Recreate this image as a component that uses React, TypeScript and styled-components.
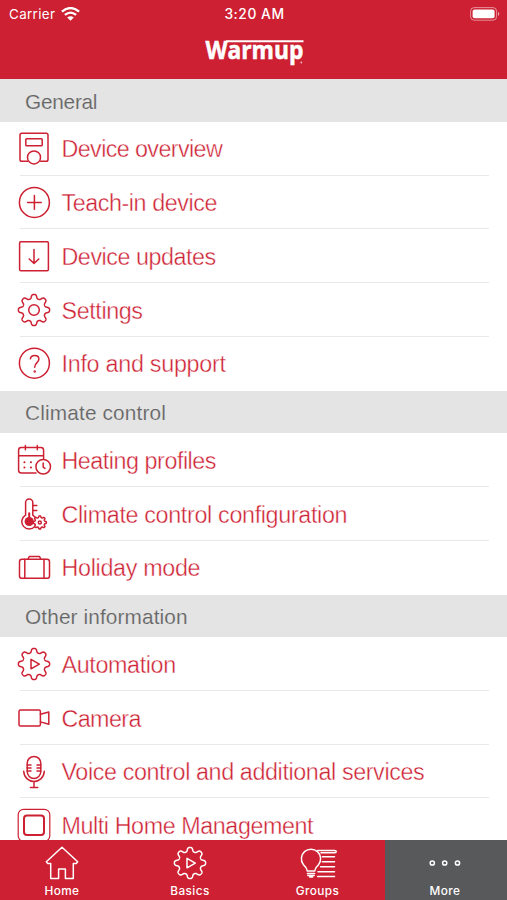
import React from 'react';
import styled, { createGlobalStyle } from 'styled-components';

const RED = '#cd2032';

const GlobalStyle = createGlobalStyle`
  * { box-sizing: border-box; }
  body { margin: 0; background: #fff; }
`;

const Screen = styled.div`
  width: 507px;
  height: 900px;
  display: flex;
  flex-direction: column;
  overflow: hidden;
  background: #fff;
  font-family: "Liberation Sans", Arial, sans-serif;
`;

const Header = styled.header`
  flex: none;
  height: 79.2px;
  background: ${RED};
  color: #fff;
`;

const StatusBar = styled.div`
  height: 26px;
  padding: 1px 7px 0 9px;
  display: grid;
  grid-template-columns: 1fr auto 1fr;
  align-items: center;
  font: 400 13.4px/24px Inter, sans-serif;
`;

const StatusGroup = styled.div<{ $end?: boolean }>`
  display: flex;
  align-items: center;
  gap: 6px;
  letter-spacing: 0.35px;
  justify-content: ${p => (p.$end ? 'flex-end' : 'flex-start')};
`;

const Clock = styled.div`
  font-weight: 500;
  font-size: 13.8px;
  letter-spacing: 0.55px;
`;

const Brand = styled.div`
  display: flex;
  justify-content: center;
  padding-top: 6px;
`;

const List = styled.main`
  flex: 1;
  min-height: 0;
  overflow: hidden;
`;

const SectionTitle = styled.h2<{ $spacing: number }>`
  margin: 0;
  height: 42.8px;
  padding: 1.5px 0 0 25px;
  background: #e4e4e4;
  color: #666;
  font-weight: 400;
  font-size: 20.8px;
  line-height: 42px;
  letter-spacing: ${p => p.$spacing}px;
  -webkit-text-stroke: 0.15px #e4e4e4;
`;

const Row = styled.div`
  height: 53.73px;
  padding-left: 16px;
  display: flex;
  align-items: center;
`;

const RowIcon = styled.svg`
  flex: none;
  width: 36px;
  height: 36px;
  overflow: visible;
  fill: none;
  stroke: ${RED};
  stroke-width: 1.5;
  stroke-linecap: round;
  stroke-linejoin: round;
`;

const RowLabel = styled.span<{ $spacing: number }>`
  margin-left: 9.5px;
  padding-top: 1.2px;
  white-space: nowrap;
  color: ${RED};
  font-size: 23.3px;
  line-height: 30px;
  letter-spacing: ${p => p.$spacing}px;
  -webkit-text-stroke: 0.4px #fff;
`;

const Divider = styled.div`
  height: 1px;
  margin: -1px 18px 0 20px;
  background: #e8e8ea;
`;

const TabBar = styled.nav`
  flex: none;
  height: 60.3px;
  display: grid;
  grid-template-columns: 124px 132px 129px 1fr;
  background: ${RED};
`;

const Tab = styled.div<{ $active?: boolean; $shift?: number }>`
  display: flex;
  flex-direction: column;
  align-items: center;
  padding: 5px ${p => p.$shift ?? 0}px 0 0;
  background: ${p => (p.$active ? '#58595b' : RED)};
  color: #fff;
  font: 500 11.8px/16px Inter, sans-serif;
  letter-spacing: 0.4px;
`;

const TabIcon = styled(RowIcon)`
  stroke: #fff;
  margin-bottom: 2.6px;
`;

function gearPath(cx: number, cy: number, base: number, depth: number, teeth = 8) {
  const points: string[] = [];
  for (let i = 0; i < 240; i++) {
    const a = (i / 240) * Math.PI * 2;
    const r = base + (depth * Math.tanh(1.7 * Math.cos(teeth * a))) / Math.tanh(1.7);
    points.push(`${(cx + r * Math.sin(a)).toFixed(2)} ${(cy - r * Math.cos(a)).toFixed(2)}`);
  }
  return `M${points.join('L')}Z`;
}

const gear = gearPath(0, 0, 13.6, 2);

const icons = {
  device: (
    <>
      <path d="M-6.4 12.3H-12.2Q-14 12.3-14 10.5V-14Q-14-15.8-12.2-15.8H12.2Q14-15.8 14-14V10.5Q14 12.3 12.2 12.3H6.4" />
      <rect x="-8.2" y="-10.2" width="16.4" height="7" rx="0.8" />
      <circle cx="0" cy="8.4" r="6.5" />
    </>
  ),
  add: (
    <>
      <circle cx="0.4" cy="-0.6" r="15" />
      <path d="M-6.4-.6H7.2M.4-7.4V6.2" />
    </>
  ),
  update: (
    <>
      <rect x="-14.4" y="-14.3" width="28.8" height="29" rx="1.2" />
      <path d="M0-6.4V7.2M-4.8 3L0 7.4 4.8 3" />
    </>
  ),
  settings: (
    <>
      <path d={gear} />
      <circle r="5.3" />
    </>
  ),
  help: (
    <>
      <circle cx="0.4" cy="-0.8" r="15" />
      <path d="M-3.6-5.2Q-3.2-8.6 .8-8.6T4.9-4.9Q4.9-2.9 2.8-1.2T.7 3.2" />
      <circle cx="0.7" cy="7.5" r="0.5" />
    </>
  ),
  calendar: (
    <>
      <path d="M2 13H-12.5Q-15.4 13-15.4 10.2V-9.8Q-15.4-12.4-12.8-12.4H6.8Q9.6-12.4 9.6-9.8V-1.5M-15.4-4.2H9.6M-8.6-14.6V-10.2M3.3-14.6V-10.2" />
      <path d="M-9.6 2.2h.1M-3.1 2.2h.1M-9.6 7.4h.1M-3.1 7.4h.1" strokeWidth="2" />
      <circle cx="9.2" cy="6.7" r="7.3" />
      <path d="M9.2 3V7.2L11 8.4" />
    </>
  ),
  climate: (
    <>
      <path d="M-8.4 1.2V-11.5A3.6 3.6 0 0 1-1.2-11.5V1.2A7.4 7.4 0 1 1-8.4 1.2M-1.2-8.5H2.8M-1.2-3.6H2.8" />
      <circle cx="-4.8" cy="7.5" r="4.6" fill={RED} stroke="none" />
      <path d="M-4.8 7V-.8" strokeWidth="2" />
      <path d={gearPath(5.8, 8.5, 5.8, 0.8)} fill="#fff" />
      <circle cx="5.8" cy="8.5" r="1.5" />
    </>
  ),
  suitcase: (
    <>
      <rect x="-14.5" y="-8.7" width="30" height="19" rx="2.4" />
      <path d="M-9.2-8.7V10.3M10-8.7V10.3M-6-8.9L-4.7-11.5H5.5L6.8-8.9" />
    </>
  ),
  automation: (
    <>
      <path d={gear} />
      <path d="M-3-4.6V4.8L5.3.1Z" />
    </>
  ),
  camera: (
    <>
      <rect x="-15" y="-7.9" width="21.4" height="16" rx="1.5" />
      <path d="M6.4-3.7L14.8-6V6.2L6.4 3.9" />
    </>
  ),
  microphone: (
    <>
      <rect x="-6.8" y="-15.6" width="13.6" height="22" rx="6.8" />
      <path d="M-6.8-7H-3M-6.8-4H-3M-6.8-1H-3M6.8-7H3M6.8-4H3M6.8-1H3" />
      <path d="M-10.3-.8C-9.5 12.8 9.5 12.8 10.3-.8M0 9.8V15.4M-3.6 15.5H3.8" />
    </>
  ),
  multiHome: (
    <>
      <rect x="-15.8" y="-15.7" width="31.6" height="32" rx="5.5" strokeWidth="1.2" />
      <rect x="-10" y="-9.5" width="20" height="19.6" rx="3" strokeWidth="2" />
    </>
  ),
  home: (
    <path d="M0-15.7L15.7-1.2 14.2.5H11.3V15.4H3.4V6H-3.4V15.4H-11.3V.5H-14.2L-15.7-1.2Z" />
  ),
  groups: (
    <>
      <path d="M-10.8 8C-10.8 4.6-13 4-14.6 1.6A9.6 9.6 0 1 1 .6 1.6C-1 4-3.2 4.6-3.2 8Z" />
      <path d="M-10.6 10.4H-3.4M-10.2 12.6H-3.8M-8.4 14H-5.4" />
      <path d="M-.5-12.6H16.8Q18.2-12.6 18.2-11.4T16.8-10.2H3M4.4-6.2H16.5M4.4-1.2H16.5M2.6 3.8H16.5M0 8.8H16.5M-.4 13.6H16.5" />
    </>
  ),
  more: (
    <>
      <circle cx="-12.7" r="2.1" />
      <circle cx="-.3" r="2.1" />
      <circle cx="12.5" r="2.1" />
    </>
  ),
};

type IconName = keyof typeof icons;
type Item = { icon: IconName; label: string; spacing: number };

const sections: { title: string; spacing: number; items: Item[] }[] = [
  {
    title: 'General',
    spacing: -0.25,
    items: [
      { icon: 'device', label: 'Device overview', spacing: -0.6 },
      { icon: 'add', label: 'Teach-in device', spacing: -0.43 },
      { icon: 'update', label: 'Device updates', spacing: -0.45 },
      { icon: 'settings', label: 'Settings', spacing: -0.38 },
      { icon: 'help', label: 'Info and support', spacing: -0.26 },
    ],
  },
  {
    title: 'Climate control',
    spacing: 0.16,
    items: [
      { icon: 'calendar', label: 'Heating profiles', spacing: -0.46 },
      { icon: 'climate', label: 'Climate control configuration', spacing: -0.33 },
      { icon: 'suitcase', label: 'Holiday mode', spacing: -0.31 },
    ],
  },
  {
    title: 'Other information',
    spacing: 0.12,
    items: [
      { icon: 'automation', label: 'Automation', spacing: -0.36 },
      { icon: 'camera', label: 'Camera', spacing: -0.6 },
      { icon: 'microphone', label: 'Voice control and additional services', spacing: -0.38 },
      { icon: 'multiHome', label: 'Multi Home Management', spacing: -0.41 },
    ],
  },
];

const tabs: { icon: IconName; label: string; active?: boolean; shift?: number }[] = [
  { icon: 'home', label: 'Home' },
  { icon: 'automation', label: 'Basics' },
  { icon: 'groups', label: 'Groups', shift: 6 },
  { icon: 'more', label: 'More', active: true, shift: 2 },
];

function Wifi() {
  return (
    <svg width="19" height="14" viewBox="0 0 19 14" fill="none" stroke="#fff" strokeWidth="2.3">
      <path d="M.9 4.6Q9.5-2.5 18.1 4.6M3.9 7.9Q9.5 3.3 15.1 7.9" />
      <path d="M6.2 10.5Q9.5 7.9 12.8 10.5L9.5 13.8Z" fill="#fff" stroke="none" />
    </svg>
  );
}

function Battery() {
  return (
    <svg width="30" height="14" viewBox="0 0 30 14">
      <rect x="0.6" y="0.6" width="26" height="12.6" rx="3.6" fill="none" stroke="#fff" strokeOpacity=".5" />
      <rect x="2.6" y="2.5" width="22" height="8.8" rx="2" fill="#fff" />
      <path d="M28 4.8Q30.6 6.9 28 9Z" fill="#fff" fillOpacity=".6" />
    </svg>
  );
}

const LogoText = styled.text`
  fill: #fff;
  stroke: #fff;
  stroke-width: 0.5;
  font-family: "Open Sans", sans-serif;
  font-weight: 700;
  font-size: 24.6px;
`;

function Logo() {
  return (
    <svg width="106" height="42" viewBox="0 0 106 42">
      <LogoText x="4.4" y="27" textLength="98" lengthAdjust="spacingAndGlyphs">Warmup</LogoText>
      <path d="M25 9.2H102.5" stroke="#fff" strokeWidth="1.9" />
      <circle cx="100.3" cy="30.5" r=".9" fill="#fff" fillOpacity=".7" />
    </svg>
  );
}

export default function App() {
  return (
    <Screen>
      <GlobalStyle />
      <Header>
        <StatusBar>
          <StatusGroup>Carrier <Wifi /></StatusGroup>
          <Clock>3:20 AM</Clock>
          <StatusGroup $end><Battery /></StatusGroup>
        </StatusBar>
        <Brand><Logo /></Brand>
      </Header>
      <List>
        {sections.map(section => (
          <section key={section.title}>
            <SectionTitle $spacing={section.spacing}>{section.title}</SectionTitle>
            {section.items.map((item, i) => (
              <React.Fragment key={item.label}>
                <Row>
                  <RowIcon viewBox="-18 -18 36 36">{icons[item.icon]}</RowIcon>
                  <RowLabel $spacing={item.spacing}>{item.label}</RowLabel>
                </Row>
                {i < section.items.length - 1 && <Divider />}
              </React.Fragment>
            ))}
          </section>
        ))}
      </List>
      <TabBar>
        {tabs.map(tab => (
          <Tab key={tab.label} $active={tab.active} $shift={tab.shift}>
            <TabIcon viewBox="-18 -18 36 36">{icons[tab.icon]}</TabIcon>
            {tab.label}
          </Tab>
        ))}
      </TabBar>
    </Screen>
  );
}
